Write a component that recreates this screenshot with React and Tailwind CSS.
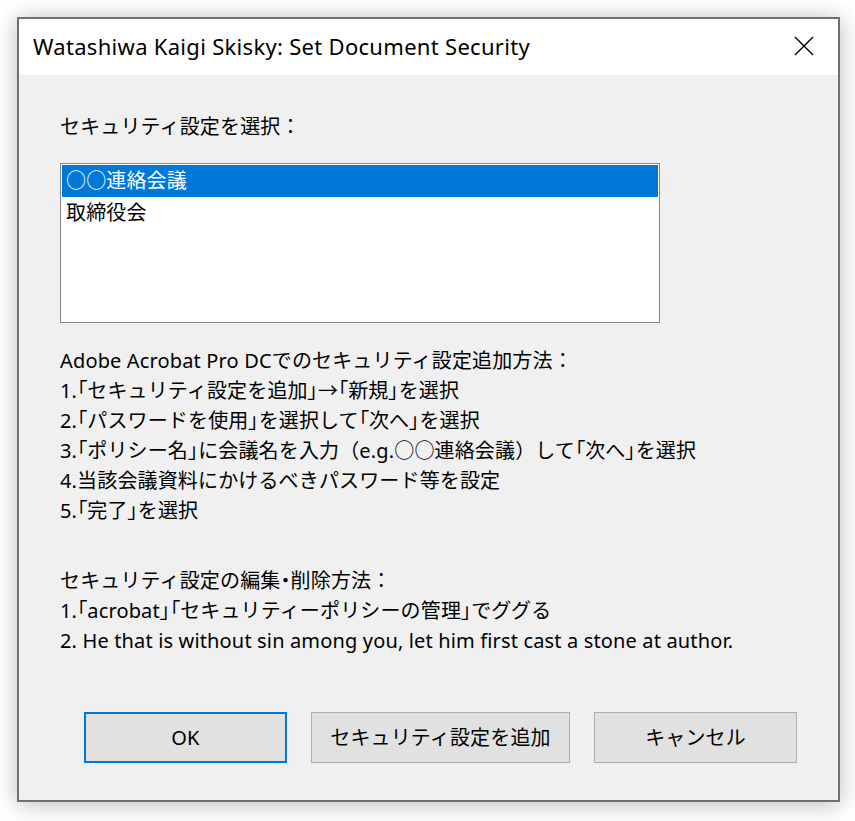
import React, { useState } from 'react';

const items = ['○○連絡会議', '取締役会'];

const addSteps = [
  'Adobe Acrobat Pro DCでのセキュリティ設定追加方法：',
  '1.「セキュリティ設定を追加」→「新規」を選択',
  '2.「パスワードを使用」を選択して「次へ」を選択',
  '3.「ポリシー名」に会議名を入力（e.g.○○連絡会議）して「次へ」を選択',
  '4.当該会議資料にかけるべきパスワード等を設定',
  '5.「完了」を選択',
];

const editSteps = [
  'セキュリティ設定の編集・削除方法：',
  '1.「acrobat」「セキュリティーポリシーの管理」でググる',
  '2. He that is without sin among you, let him first cast a stone at author.',
];

// brackets, arrow and middle dot are drawn narrow in the original dialog font
const narrow = /^[「」→・]$/;
const fmt = (s) =>
  s.split(/([「」→・])/).map((part, i) =>
    narrow.test(part) ? (
      <span key={i} className="[font-feature-settings:'palt']">{part}</span>
    ) : (
      part
    )
  );

export default function App() {
  const [selected, setSelected] = useState(0);

  return (
    <div className="w-[855px] h-[821px] bg-white pt-[17px] pl-[17px] font-['Noto_Sans','Noto_Sans_CJK_JP',sans-serif] text-black">
      <div className="w-[823px] h-[785px] border-2 border-[#707070] bg-[#f0f0f0] flex flex-col shadow-[0_2px_22px_rgba(0,0,0,0.28)]">
        {/* title bar */}
        <div className="h-[56px] bg-white flex items-center justify-between pl-[14px] pr-[24px]">
          <span className="text-[22px] leading-none pb-[2px] tracking-[0.3px]">Watashiwa Kaigi Skisky: Set Document Security</span>
          <svg width="20" height="20" viewBox="0 0 20 20" className="mb-[2px]">
            <path d="M1 1 L19 19 M19 1 L1 19" stroke="#000" strokeWidth="1.4" fill="none" />
          </svg>
        </div>

        {/* body */}
        <div className="flex-1 flex flex-col pl-[41px] pt-[37px] text-[20px] leading-[30px] tracking-[0.15px]">
          <div>セキュリティ設定を選択：</div>

          <div className="mt-[21px] w-[600px] h-[160px] border border-[#828790] bg-white p-px">
            {items.map((name, i) => (
              <div
                key={name}
                onClick={() => setSelected(i)}
                className={`h-[32px] pl-[4px] leading-[32px] ${selected === i ? 'bg-[#0078d7] text-white' : ''}`}
              >
                {name}
              </div>
            ))}
          </div>

          <div className="mt-[23px]">
            {addSteps.map((line) => (
              <div key={line}>{fmt(line)}</div>
            ))}
          </div>

          <div className="mt-[40px]">
            {editSteps.map((line) => (
              <div key={line}>{fmt(line)}</div>
            ))}
          </div>

          {/* buttons */}
          <div className="mt-auto mb-[37px] ml-[24px] flex gap-[24px]">
            <button className="w-[203px] h-[51px] bg-[#e1e1e1] border-2 border-[#0078d7]">OK</button>
            <button className="w-[259px] h-[51px] bg-[#e1e1e1] border border-[#adadad]">セキュリティ設定を追加</button>
            <button className="w-[203px] h-[51px] bg-[#e1e1e1] border border-[#adadad]">キャンセル</button>
          </div>
        </div>
      </div>
    </div>
  );
}
